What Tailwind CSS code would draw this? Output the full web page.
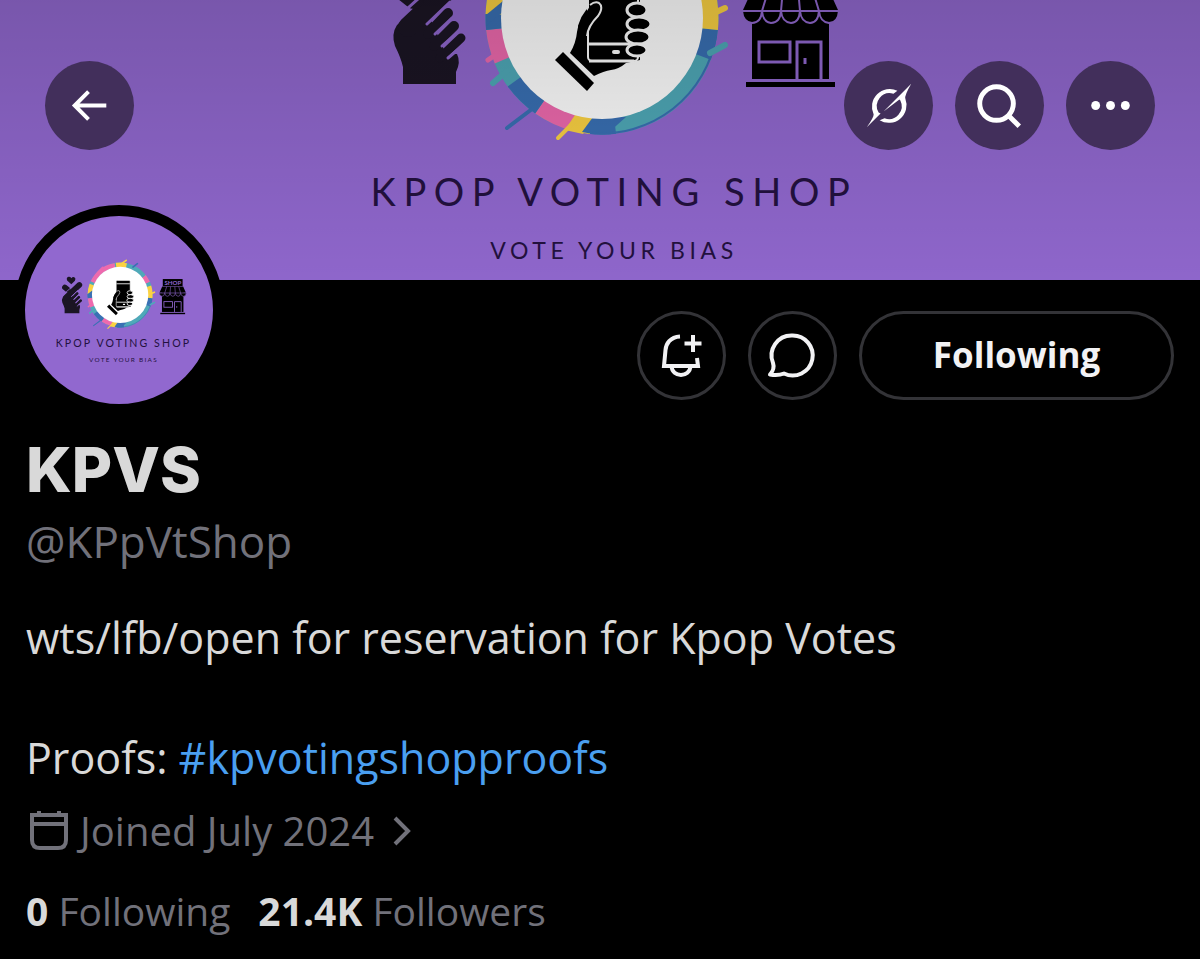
<!DOCTYPE html>
<html lang="en">
<head>
    <meta charset="UTF-8">
    <meta name="viewport" content="width=device-width, initial-scale=1.0">
    <title>KPVS (@KPpVtShop)</title>
    <script src="https://cdn.jsdelivr.net/npm/@tailwindcss/browser@4"></script>
</head>
<body class="bg-black min-h-screen font-['Open_Sans',sans-serif] text-[#d9d9d9]">
    <!-- Shop artwork, shared by the banner and the avatar -->
    <svg class="hidden" aria-hidden="true">
        <defs>
            <g id="artwork">
                <!-- finger heart -->
                <g fill="#1b1524" stroke-linecap="round" stroke-linejoin="round">
                    <path d="M403 84 V67 Q401 58 395 46 Q391 34 397 25 L410 14 L430 18 L446 54 L457 54 Q461 62 456 72 V84 Z"/>
                    <g fill="none" stroke="#1b1524">
                        <path d="M408 27 L456 -18" stroke-width="20"/>
                        <path d="M428 34 L448 13" stroke-width="10"/>
                        <path d="M434 46 L454 26" stroke-width="10"/>
                        <path d="M440 58 L461 38" stroke-width="9"/>
                        <path d="M404 -9 L414 -1" stroke-width="20"/>
                    </g>
                    <g fill="none" stroke="#9168cf" stroke-width="3">
                        <path d="M399 16 L438 -19"/>
                        <path d="M427 24 L450 2"/>
                        <path d="M435 34 L452 18"/>
                        <path d="M442 46 L459 31"/>
                        <path d="M448 58 L462 46"/>
                    </g>
                    <path d="M427 -20 L412 -34 Q408 -44 417 -47 Q424 -48 427 -42 Q432 -48 438 -45 Q445 -40 440 -33 Z"/>
                </g>

                <!-- paint ring -->
                <g fill="none" stroke-width="17">
                    <circle cx="602" cy="18" r="108" stroke="#4fa9b8"/>
                    <circle cx="602" cy="18" r="108" pathLength="360" stroke="#3970b4" stroke-dasharray="15 345" stroke-dashoffset="-6"/>
                    <circle cx="602" cy="18" r="108" pathLength="360" stroke="#3970b4" stroke-dasharray="14 346" stroke-dashoffset="-83"/>
                    <circle cx="602" cy="18" r="108" pathLength="360" stroke="#fbd243" stroke-dasharray="9 351" stroke-dashoffset="-96"/>
                    <circle cx="602" cy="18" r="108" pathLength="360" stroke="#ee6aae" stroke-dasharray="20 340" stroke-dashoffset="-105"/>
                    <circle cx="602" cy="18" r="108" pathLength="360" stroke="#3970b4" stroke-dasharray="19 341" stroke-dashoffset="-125"/>
                    <circle cx="602" cy="18" r="108" pathLength="360" stroke="#ee6aae" stroke-dasharray="17 343" stroke-dashoffset="-157"/>
                    <circle cx="602" cy="18" r="108" pathLength="360" stroke="#3970b4" stroke-dasharray="8 352" stroke-dashoffset="-174"/>
                    <circle cx="602" cy="18" r="108" pathLength="360" stroke="#fbd243" stroke-dasharray="18 342" stroke-dashoffset="-182"/>
                    <circle cx="602" cy="18" r="108" pathLength="360" stroke="#ee6aae" stroke-dasharray="55 305" stroke-dashoffset="-205"/>
                    <circle cx="602" cy="18" r="108" pathLength="360" stroke="#fbd243" stroke-dasharray="20 340" stroke-dashoffset="-262"/>
                    <circle cx="602" cy="18" r="108" pathLength="360" stroke="#ee6aae" stroke-dasharray="14 346" stroke-dashoffset="-322"/>
                    <circle cx="602" cy="18" r="108" pathLength="360" stroke="#fbd243" stroke-dasharray="23 337" stroke-dashoffset="-343"/>
                    <!-- slanted ends of the stripes -->
                    <path d="M486 15 L503 1 V12 L486 26 Z" fill="#3970b4" stroke="none"/>
                    <path d="M575 115 L565 130 L583 134 L597 118 Z" fill="#fbd243" stroke="none"/>
                    <path d="M593 117 L582 132 Q595 135 607 134 L626 117 Z" fill="#3970b4" stroke="none"/>
                    <path d="M716 36 A116 116 0 0 1 592 133" stroke="#3970b4" stroke-width="2"/>
                    <g stroke-linecap="round" stroke-width="4">
                        <path d="M536 106 L507 128" stroke="#3970b4"/>
                        <path d="M575 121 L558 138" stroke="#fbd243"/>
                        <path d="M498 53 L488 60" stroke="#ee6aae" stroke-width="5"/>
                        <path d="M508 70 L493 83" stroke="#4fa9b8" stroke-width="6"/>
                        <path d="M712 14 L725 8" stroke="#fbd243" stroke-width="6"/>
                        <path d="M710 53 L725 45" stroke="#4fa9b8" stroke-width="6"/>
                        <path d="M604 -92 L624 -106" stroke="#fbd243" stroke-width="6"/>
                        <path d="M648 -82 L664 -94" stroke="#3970b4" stroke-width="6"/>
                        <path d="M520 -58 L540 -80" stroke="#ee6aae" stroke-width="8"/>
                    </g>
                </g>
                <circle cx="602" cy="18" r="101" fill="#fff"/>

                <!-- hand holding a phone -->
                <g>
                    <path d="M563 52 L594 83 L587 91 L555 60 Z"/>
                    <path d="M570 53 Q576 43 577 32 Q579 15 592 4 L599 2 L640 0 L640 60 L626 63 Q619 69 611 70 Q604 71 594 76 Z"/>
                    <rect x="588" y="-34" width="50" height="95" rx="4" stroke="#fff" stroke-width="2"/>
                    <path d="M586 35 Q590 26 598 17 Q603 8 600 4 Q596 0 590 6 L578 26 L584 45 Z"/>
                    <path d="M587 36 Q588 26 598 16 Q604 7 599 3 Q595 1 590 5" fill="none" stroke="#fff" stroke-width="2"/>
                    <path d="M589 44 H630 M589 61 H634 M589 -22 H637" fill="none" stroke="#fff" stroke-width="3"/>
                    <path d="M614 52 H618" stroke="#fff" stroke-width="4" stroke-linecap="round"/>
                    <g stroke="#fff" stroke-width="3">
                        <ellipse cx="637" cy="10" rx="10" ry="7"/>
                        <ellipse cx="639" cy="24" rx="12" ry="7"/>
                        <ellipse cx="638" cy="37" rx="12" ry="7"/>
                        <ellipse cx="637" cy="50" rx="10" ry="6"/>
                    </g>
                </g>

                <!-- shop -->
                <g>
                    <rect x="746" y="82" width="89" height="5"/>
                    <rect x="752" y="8" width="77" height="71"/>
                    <rect x="755" y="-39" width="71" height="25"/>
                    <path d="M753 -12 H828 L838 10 H743 Z"/>
                    <g stroke="#9168cf" stroke-width="2">
                        <path d="M742 11 H762 Q761 23 752 23 Q743 22 742 11 Z"/>
                        <path d="M762 11 H781 Q780 23 771 23 Q763 22 762 11 Z"/>
                        <path d="M781 11 H800 Q799 23 791 23 Q782 22 781 11 Z"/>
                        <path d="M800 11 H819 Q818 23 810 23 Q801 22 800 11 Z"/>
                        <path d="M819 11 H839 Q838 23 829 23 Q820 22 819 11 Z"/>
                        <path d="M769 -12 L762 11 M783 -12 L781 11 M798 -12 L800 11 M812 -12 L819 11"/>
                    </g>
                    <g fill="none" stroke="#9168cf" stroke-width="3">
                        <rect x="759" y="42" width="31" height="20"/>
                        <path d="M797 79 V42 H821 V79"/>
                        <path d="M805 58 V64"/>
                    </g>
                    <text x="791" y="-19" text-anchor="middle" fill="#9168cf" class="font-['Lato',sans-serif] text-[22px] font-bold">SHOP</text>
                </g>

                <text x="614" y="206" text-anchor="middle" fill="#23113f" class="font-['Lato',sans-serif] text-[38px] tracking-[0.2em]">KPOP VOTING SHOP</text>
                <text x="614" y="259" text-anchor="middle" fill="#23113f" class="font-['Lato',sans-serif] text-[23px] tracking-[0.2em]">VOTE YOUR BIAS</text>
            </g>
        </defs>
    </svg>

    <header class="relative h-[280px] bg-[#9168cf] overflow-hidden">
        <svg class="w-full h-full" viewBox="0 0 1200 280" preserveAspectRatio="xMidYMid slice" role="img" aria-label="Kpop Voting Shop banner">
            <use href="#artwork"/>
        </svg>
        <div class="absolute inset-0 bg-linear-to-b from-black/17 to-black/2"></div>
        <nav class="absolute inset-x-0 top-0 flex items-center gap-[22px] px-[45px] pt-[61px] text-white">
            <button type="button" aria-label="Back" class="size-[89px] rounded-full bg-[#422f5b] mr-auto">
                <svg class="size-full" viewBox="0 0 90 90" fill="none" stroke="currentColor" stroke-width="4">
                    <path d="M62 45 H30 M44 31 L30 45 L44 59"/>
                </svg>
            </button>
            <button type="button" aria-label="Grok" class="size-[89px] rounded-full bg-[#422f5b]">
                <svg class="size-full" viewBox="0 0 90 90" fill="currentColor">
                    <path d="M54 30 A18 18 0 0 0 30 54 Q30 57 23 67 L37 53 L35 52 A13 13 0 0 1 50 33 Z"/>
                    <path d="M36 60 A18 18 0 0 0 62 38 Q61 35 68 23 L40 51 L56 39 L57 40 A13 13 0 0 1 41 58 Z"/>
                </svg>
            </button>
            <button type="button" aria-label="Search" class="size-[89px] rounded-full bg-[#422f5b]">
                <svg class="size-full" viewBox="0 0 90 90" fill="none" stroke="currentColor" stroke-width="5">
                    <circle cx="42" cy="43" r="17"/>
                    <path d="M54 55 L65 66"/>
                </svg>
            </button>
            <button type="button" aria-label="More" class="size-[89px] rounded-full bg-[#422f5b]">
                <svg class="size-full" viewBox="0 0 90 90" fill="currentColor">
                    <circle cx="30" cy="45" r="4.500"/>
                    <circle cx="45" cy="45" r="4.500"/>
                    <circle cx="60" cy="45" r="4.500"/>
                </svg>
            </button>
        </nav>
    </header>

    <main class="px-[26px]">
        <div class="flex items-start justify-between">
            <div class="relative -mt-[75px] -ml-3 size-[210px] rounded-full border-[11px] border-black bg-[#9168cf] overflow-hidden shrink-0">
                <svg class="w-full h-full" viewBox="261 -265 674 674" role="img" aria-label="Kpop Voting Shop avatar">
                    <use href="#artwork"/>
                </svg>
            </div>
            <div class="flex gap-[22px] pt-[31px] text-[#f2f2f4]">
                <button type="button" aria-label="Notifications" class="size-[89px] rounded-full border-3 border-[#333337]">
                    <svg class="size-full" viewBox="4 3 83 83" fill="none" stroke="currentColor" stroke-width="4">
                        <path d="M44 25.500 C34 26 30 33 29.500 39 L28 55 H62 L61 47"/>
                        <path d="M35.500 55 C36 67 54 67 54.500 55"/>
                        <path d="M57 24 V41 M48.500 32.500 H65.500"/>
                    </svg>
                </button>
                <button type="button" aria-label="Message" class="size-[89px] rounded-full border-3 border-[#333337]">
                    <svg class="size-full" viewBox="4 3 83 83" fill="none" stroke="currentColor" stroke-width="4" stroke-linejoin="round">
                        <path d="M45 24.500 A20 20 0 1 1 37 62.500 Q31 65 23 63.500 Q28 58 26 52 A20 20 0 0 1 45 24.500 Z"/>
                    </svg>
                </button>
                <button type="button" class="w-[315px] h-[89px] rounded-full border-3 border-[#333337] text-[35px] font-bold">Following</button>
            </div>
        </div>

        <h1 class="mt-4 font-['Inter',sans-serif] text-[62px] leading-[78px] font-extrabold">KPVS</h1>
        <p class="text-[44px] leading-[64px] text-[#71717a]">@KPpVtShop</p>

        <p class="mt-[35px] text-[43px] leading-[60px]">wts/lfb/open for reservation for Kpop Votes<br><br>Proofs: <a href="#" class="text-[#4a9ff0]">#kpvotingshopproofs</a></p>

        <a href="#" class="mt-[13px] flex items-center gap-2 text-[40px] leading-[60px] text-[#71717a]">
            <svg class="w-[46px] h-[46px]" viewBox="0 0 46 46" fill="none" stroke="currentColor" stroke-width="4">
                <path d="M6 7 H40 V32 Q40 40 32 40 H14 Q6 40 6 32 Z M6 16 H40 M13 3 V8 M33 3 V8"/>
            </svg>
            <span>Joined July 2024</span>
            <svg class="ml-2 w-[24px] h-[46px]" viewBox="0 0 24 46" fill="none" stroke="currentColor" stroke-width="4">
                <path d="M5 10 L18 23 L5 36"/>
            </svg>
        </a>

        <div class="mt-5 flex gap-7 text-[39px] leading-[60px] text-[#71717a]">
            <a href="#"><strong class="text-[#d9d9d9]">0</strong> Following</a>
            <a href="#"><strong class="text-[#d9d9d9]">21.4K</strong> Followers</a>
        </div>
    </main>
</body>
</html>
